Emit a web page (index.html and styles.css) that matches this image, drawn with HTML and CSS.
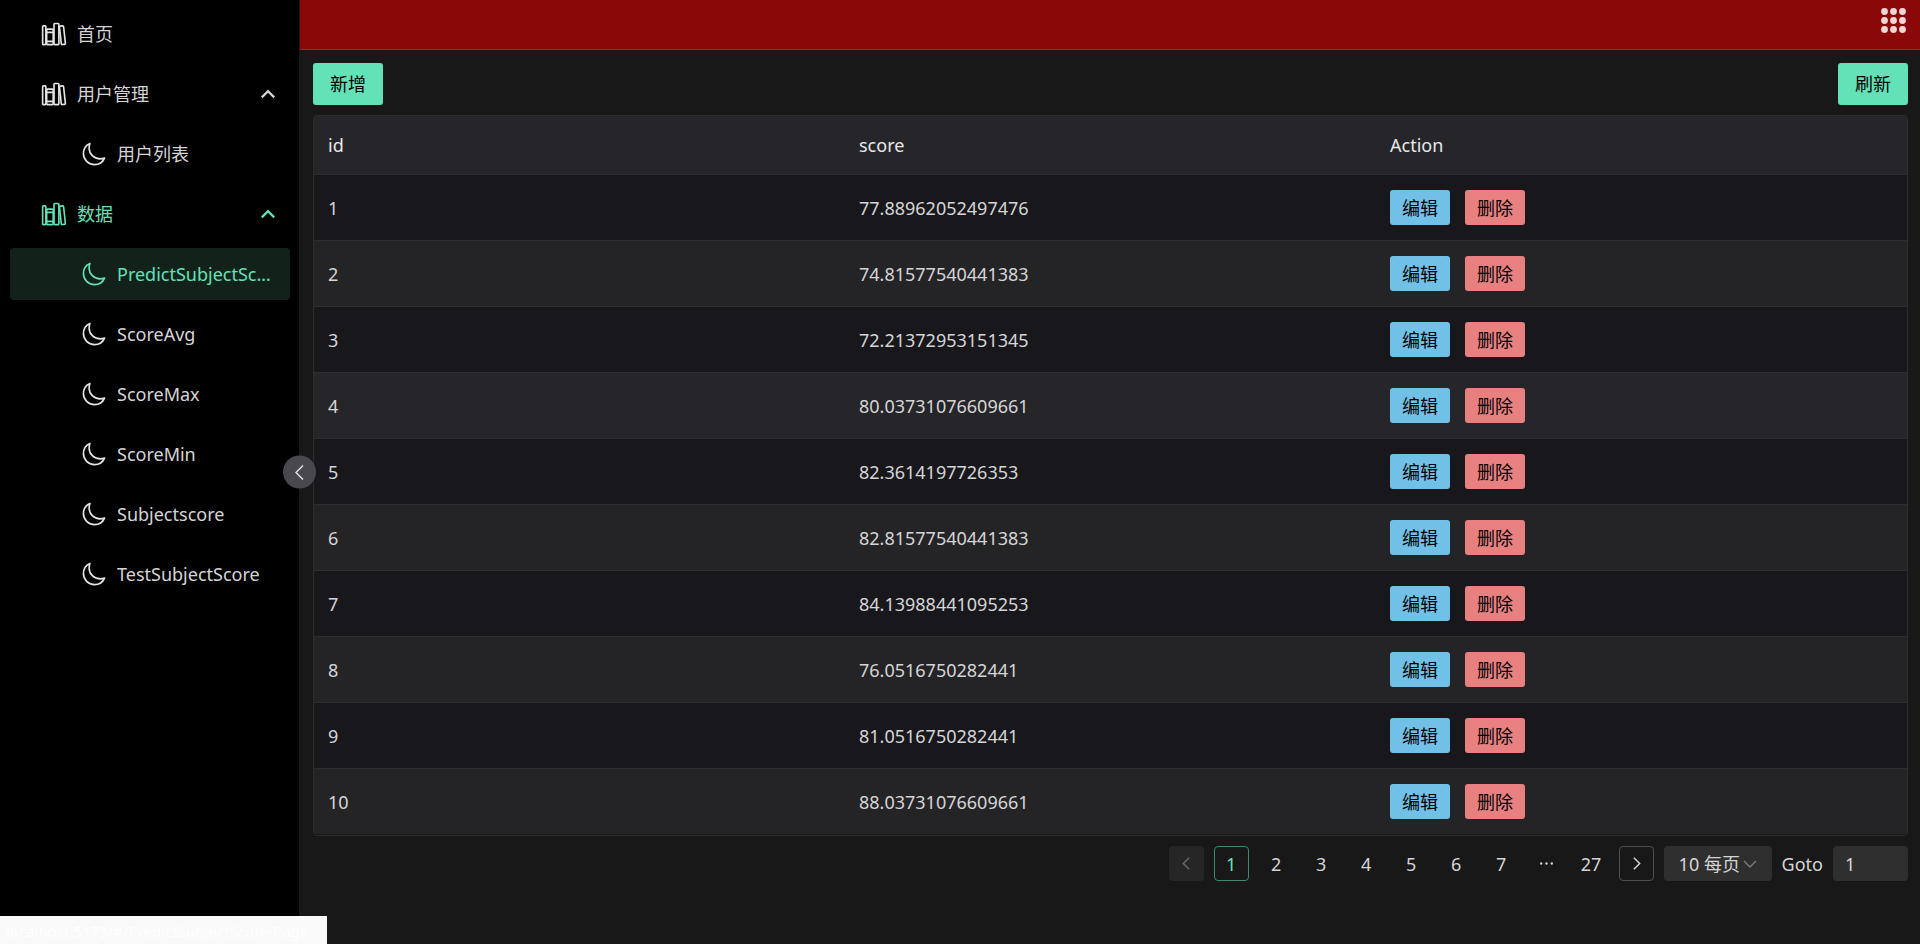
FILE: index.html
```html
<!DOCTYPE html>
<html lang="zh-CN">
<head>
<meta charset="utf-8">
<meta name="viewport" content="width=device-width, initial-scale=1">
<title>PredictSubjectScore</title>
<link rel="stylesheet" href="styles.css">
</head>
<body>
<svg class="sprite" aria-hidden="true">
  <symbol id="library" viewBox="0 0 512 512">
    <rect x="32" y="96" width="64" height="368" rx="16"/>
    <path d="M112 224h128M112 400h128"/>
    <rect x="112" y="160" width="128" height="304" rx="16"/>
    <rect x="256" y="48" width="96" height="416" rx="16"/>
    <path d="M422.46 96.11l-40.4 4.25c-11.12 1.17-19.18 11.57-17.93 23.1l34.92 321.59c1.26 11.53 11.37 20 22.49 18.84l40.4-4.25c11.12-1.17 19.18-11.57 17.93-23.1L445 115c-1.31-11.58-11.42-20.06-22.54-18.89z"/>
  </symbol>
  <symbol id="moon" viewBox="0 0 512 512">
    <path d="M160 136c0-30.62 4.51-61.61 16-88C99.57 81.27 48 159.32 48 248c0 119.29 96.71 216 216 216 88.68 0 166.73-51.57 200-128-26.39 11.49-57.38 16-88 16-119.29 0-216-96.71-216-216z"/>
  </symbol>
</svg>
<div class="layout">
  <aside class="sidebar">
    <nav class="menu">
      <a class="item" href="#/"><svg class="icon"><use href="#library"/></svg><span class="label">首页</span></a>
      <button class="item" type="button" aria-expanded="true"><svg class="icon"><use href="#library"/></svg><span class="label">用户管理</span><svg class="arrow" viewBox="0 0 16 16"><path d="M2.5 11L8 5.5L13.5 11"/></svg></button>
      <a class="item child" href="#/users"><svg class="icon"><use href="#moon"/></svg><span class="label">用户列表</span></a>
      <button class="item active" type="button" aria-expanded="true"><svg class="icon"><use href="#library"/></svg><span class="label">数据</span><svg class="arrow" viewBox="0 0 16 16"><path d="M2.5 11L8 5.5L13.5 11"/></svg></button>
      <a class="item child active selected" href="#/PredictSubjectScore-Page"><svg class="icon"><use href="#moon"/></svg><span class="label">PredictSubjectScore</span></a>
      <a class="item child" href="#/ScoreAvg-Page"><svg class="icon"><use href="#moon"/></svg><span class="label">ScoreAvg</span></a>
      <a class="item child" href="#/ScoreMax-Page"><svg class="icon"><use href="#moon"/></svg><span class="label">ScoreMax</span></a>
      <a class="item child" href="#/ScoreMin-Page"><svg class="icon"><use href="#moon"/></svg><span class="label">ScoreMin</span></a>
      <a class="item child" href="#/Subjectscore-Page"><svg class="icon"><use href="#moon"/></svg><span class="label">Subjectscore</span></a>
      <a class="item child" href="#/TestSubjectScore-Page"><svg class="icon"><use href="#moon"/></svg><span class="label">TestSubjectScore</span></a>
    </nav>
    <button class="collapse" type="button" aria-label="收起菜单"><svg viewBox="0 0 18 18"><path d="M12 2L5 9L12 16"/></svg></button>
  </aside>
  <div class="main">
    <header class="topbar">
      <button class="apps" type="button" aria-label="应用">
        <svg viewBox="0 0 25 25"><circle cx="3.5" cy="3.5" r="3.4"/><circle cx="12.5" cy="3.5" r="3.4"/><circle cx="21.5" cy="3.5" r="3.4"/><circle cx="3.5" cy="12.5" r="3.4"/><circle cx="12.5" cy="12.5" r="3.4"/><circle cx="21.5" cy="12.5" r="3.4"/><circle cx="3.5" cy="21.5" r="3.4"/><circle cx="12.5" cy="21.5" r="3.4"/><circle cx="21.5" cy="21.5" r="3.4"/></svg>
      </button>
    </header>
    <main class="content">
      <div class="toolbar">
        <button class="btn primary" type="button">新增</button>
        <button class="btn primary" type="button">刷新</button>
      </div>
      <div class="table-wrap">
        <table class="table">
          <thead><tr><th scope="col">id</th><th scope="col">score</th><th scope="col">Action</th></tr></thead>
          <tbody>
            <tr><td>1</td><td>77.88962052497476</td><td><div class="actions"><button class="btn small info" type="button">编辑</button><button class="btn small danger" type="button">删除</button></div></td></tr>
            <tr><td>2</td><td>74.81577540441383</td><td><div class="actions"><button class="btn small info" type="button">编辑</button><button class="btn small danger" type="button">删除</button></div></td></tr>
            <tr><td>3</td><td>72.21372953151345</td><td><div class="actions"><button class="btn small info" type="button">编辑</button><button class="btn small danger" type="button">删除</button></div></td></tr>
            <tr class="hovered"><td>4</td><td>80.03731076609661</td><td><div class="actions"><button class="btn small info" type="button">编辑</button><button class="btn small danger" type="button">删除</button></div></td></tr>
            <tr><td>5</td><td>82.3614197726353</td><td><div class="actions"><button class="btn small info" type="button">编辑</button><button class="btn small danger" type="button">删除</button></div></td></tr>
            <tr><td>6</td><td>82.81577540441383</td><td><div class="actions"><button class="btn small info" type="button">编辑</button><button class="btn small danger" type="button">删除</button></div></td></tr>
            <tr><td>7</td><td>84.13988441095253</td><td><div class="actions"><button class="btn small info" type="button">编辑</button><button class="btn small danger" type="button">删除</button></div></td></tr>
            <tr><td>8</td><td>76.0516750282441</td><td><div class="actions"><button class="btn small info" type="button">编辑</button><button class="btn small danger" type="button">删除</button></div></td></tr>
            <tr><td>9</td><td>81.0516750282441</td><td><div class="actions"><button class="btn small info" type="button">编辑</button><button class="btn small danger" type="button">删除</button></div></td></tr>
            <tr><td>10</td><td>88.03731076609661</td><td><div class="actions"><button class="btn small info" type="button">编辑</button><button class="btn small danger" type="button">删除</button></div></td></tr>
          </tbody>
        </table>
      </div>
      <nav class="pagination" aria-label="分页">
        <button class="page prev" type="button" disabled aria-label="上一页"><svg viewBox="0 0 16 16"><path d="M10.500 2.500L5 8L10.500 13.500"/></svg></button>
        <button class="page current" type="button" aria-current="page">1</button>
        <button class="page" type="button">2</button>
        <button class="page" type="button">3</button>
        <button class="page" type="button">4</button>
        <button class="page" type="button">5</button>
        <button class="page" type="button">6</button>
        <button class="page" type="button">7</button>
        <button class="page more" type="button" aria-label="更多"><svg viewBox="0 0 16 16"><circle cx="3" cy="8" r="1.100"/><circle cx="8" cy="8" r="1.100"/><circle cx="13" cy="8" r="1.100"/></svg></button>
        <button class="page" type="button">27</button>
        <button class="page next" type="button" aria-label="下一页"><svg viewBox="0 0 16 16"><path d="M5.500 2.500L11 8L5.500 13.500"/></svg></button>
        <div class="size">
          <select class="size-select" aria-label="每页条数"><option>10 每页</option><option>20 每页</option><option>50 每页</option></select>
          <svg class="size-arrow" viewBox="0 0 16 16"><path d="M2 5L8 11L14 5"/></svg>
        </div>
        <label for="goto">Goto</label>
        <input class="goto" id="goto" type="text" value="1">
      </nav>
    </main>
  </div>
</div>
<div class="status">localhost:5173/#/PredictSubjectScore-Page</div>
</body>
</html>
```

FILE: styles.css
```css
*, *::before, *::after { box-sizing: border-box; }

body {
  margin: 0;
  background: #181818;
  color: #d5d5d6;
  font: 18px/28px "Noto Sans", "Noto Sans CJK SC", sans-serif;
}

button, input, select {
  font: inherit;
  color: inherit;
  margin: 0;
  padding: 0;
  border: 0;
  background: none;
}

a { color: inherit; text-decoration: none; }
svg { display: block; fill: none; stroke: currentColor; }
.sprite { position: absolute; width: 0; height: 0; }

.layout { display: flex; min-height: 100vh; }

/* Sidebar */
.sidebar {
  position: relative;
  flex: 0 0 300px;
  min-width: 0;
  background: #000;
  border-right: 1px solid #181818;
}

.menu {
  display: grid;
  grid-template-columns: minmax(0, 1fr);
  gap: 8px;
  padding: 8px 9px 8px 10px;
}

.item {
  display: flex;
  align-items: center;
  gap: 10px;
  min-width: 0;
  height: 52px;
  padding: 0 13px 0 31px;
  border-radius: 4px;
  text-align: left;
}

.child { padding-left: 71px; padding-right: 15px; }
.active { color: #63e2b7; }
.selected { background: #13211b; }

.icon {
  flex: none;
  width: 26px;
  height: 26px;
  stroke-width: 32;
  stroke-linejoin: round;
}

.item:not(.active) .icon { color: #e6e6e6; }

.label {
  flex: 1;
  min-width: 0;
  overflow: hidden;
  text-overflow: ellipsis;
  white-space: nowrap;
}

.arrow { flex: none; width: 18px; height: 18px; stroke-width: 2; }

.collapse {
  position: absolute;
  top: 50%;
  right: -17px;
  display: grid;
  place-items: center;
  width: 33px;
  height: 33px;
  border-radius: 50%;
  background: #48484e;
  color: #e4e4e5;
  transform: translateY(-50%);
}

.collapse svg { width: 18px; height: 18px; stroke-width: 1.4; }

/* Main area */
.main { flex: 1; min-width: 0; }

.topbar {
  display: flex;
  justify-content: flex-end;
  height: 50px;
  padding: 8px 14px;
  background: #8a0808;
  border-bottom: 1px solid #8d2b2b;
}

.apps { align-self: flex-start; color: #eed6d6; }
.apps svg { width: 25px; height: 25px; fill: currentColor; stroke: none; }

.content {
  display: flex;
  flex-direction: column;
  gap: 10px;
  padding: 13px 12px 13px 13px;
}

.toolbar { display: flex; justify-content: space-between; }

.btn {
  height: 42px;
  min-width: 70px;
  padding: 0 12px;
  border-radius: 3px;
  color: #000;
}

.small { height: 35px; min-width: 60px; padding: 0 10px; }
.primary { background: #63e2b7; }
.info { background: #70c0e8; }
.danger { background: #e88080; }

.table-wrap {
  overflow: hidden;
  border: 1px solid #2d2d30;
  border-radius: 4px;
}

.table {
  width: 100%;
  table-layout: fixed;
  border-collapse: separate;
  border-spacing: 0;
}

.table th, .table td {
  padding: 15px 14px;
  border-bottom: 1px solid #2d2d30;
  text-align: left;
  font-weight: 400;
}

.table th { height: 59px; background: #26262a; color: #e8e8e9; }
.table td { height: 66px; background: #18181c; }
.table tr:nth-child(even) td { background: #242426; }
.table .hovered:nth-child(even) td { background: #26262a; }
.table tr:last-child td { border-color: #181818; }
.table thead th { border-color: #2d2d30; }

.actions { display: flex; gap: 15px; }

/* Pagination */
.pagination {
  display: flex;
  align-items: center;
  justify-content: flex-end;
  gap: 10px;
}

.page {
  display: grid;
  place-items: center;
  width: 35px;
  height: 35px;
  border-radius: 4px;
}

.page svg { width: 17px; height: 17px; stroke-width: 1.4; }
.current { color: #63e2b7; border: 1px solid #3f8870; }
.prev { background: #262626; color: #676767; }
.next { border: 1px solid #4e4e4e; }
.more svg { fill: currentColor; stroke: none; }

.size { position: relative; }

.size-select {
  appearance: none;
  width: 108px;
  height: 35px;
  padding: 0 15px;
  border-radius: 4px;
  background: #2f2f2f;
}

.size-arrow {
  position: absolute;
  top: 10px;
  right: 14px;
  width: 16px;
  height: 16px;
  color: #7a7a7a;
  stroke-width: 1.4;
  pointer-events: none;
}

.goto {
  width: 75px;
  height: 35px;
  padding: 0 12px;
  border-radius: 4px;
  background: #2f2f2f;
}

/* Link address shown over the lower left corner */
.status {
  position: fixed;
  left: 0;
  bottom: 0;
  height: 28px;
  padding: 0 19px 0 6px;
  background: #fafafa;
  color: #fff;
  font-size: 15px;
  line-height: 30px;
}
```
